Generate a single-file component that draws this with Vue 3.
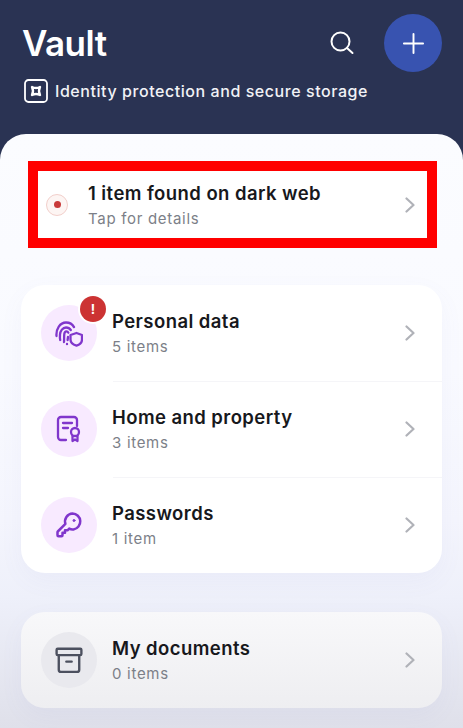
<template>
  <div class="page">
    <header class="head">
      <div class="head-top">
        <h1 class="title">Vault</h1>
        <div class="head-actions">
          <svg class="search" viewBox="0 0 24 24" fill="none" stroke="#fff" stroke-width="2" stroke-linecap="round">
            <circle cx="10.500" cy="10.500" r="9" />
            <path d="M17 17l5.500 5" />
          </svg>
          <button class="add">
            <svg viewBox="0 0 24 24" fill="none" stroke="#fff" stroke-width="2" stroke-linecap="round">
              <path d="M12 2v20M2 12h20" />
            </svg>
          </button>
        </div>
      </div>
      <div class="subtitle">
        <svg class="safe" viewBox="0 0 24 24" fill="none" stroke="#fff">
          <rect x="1" y="1" width="22" height="22" rx="3.500" stroke-width="1.800" />
          <path d="M8 8q4 2 8 0q-2 4 0 8q-4-2-8 0q2-4 0-8z" stroke-width="2.400" stroke-linejoin="round" />
        </svg>
        <span>Identity protection and secure storage</span>
      </div>
    </header>

    <main class="sheet">
      <div class="alert">
        <div class="pulse"><span></span></div>
        <div class="texts">
          <div class="name">1 item found on dark web</div>
          <div class="sub">Tap for details</div>
        </div>
        <svg class="chev" viewBox="0 0 10 16" fill="none"><path d="M1.500 1.500 8.500 8l-7 6.500" /></svg>
      </div>

      <section class="card">
        <div v-for="row in rows" :key="row.name" class="row">
          <div class="round">
            <svg v-if="row.icon === 'finger'" class="ico" viewBox="0 0 28 28" fill="none" stroke="#8036cc" stroke-width="2.300" stroke-linecap="round" stroke-linejoin="round">
              <path d="M1.500 17c-.6-7 3.500-13.500 9.500-13.500 3.600 0 6.500 1.700 8 4.600" />
              <path d="M5.200 21c-.4-1.500-.3-4-.2-5.500.3-3.600 2.700-7 6-7 2.200 0 3.800 1 4.800 2.500" />
              <path d="M9 23c.2-2 0-6 .3-8 .2-1.500 1-2.600 2.100-2.600 1 0 1.600.5 1.900 1.300" />
              <path d="M13 18l-.4 3M12 25v.2" />
              <path d="M15.500 16l6-2 5.500 2v4.500c0 3.200-2.500 5.300-5.500 6.200-3-.9-6-3-6-6.200z" />
            </svg>
            <svg v-else-if="row.icon === 'deed'" class="ico" viewBox="0 0 28 28" fill="none" stroke="#8036cc" stroke-width="2.300" stroke-linecap="round" stroke-linejoin="round">
              <path d="M11 25H6a3 3 0 0 1-3-3V5a3 3 0 0 1 3-3h13a3 3 0 0 1 3 3v6" />
              <path d="M8 8h9M8 13h5" />
              <circle cx="20" cy="17" r="4" />
              <path d="M17.500 21v5l2.500-1.500 2.500 1.500v-5" />
            </svg>
            <svg v-else class="ico" viewBox="0 0 28 28" fill="none" stroke="#8036cc" stroke-width="2.500" stroke-linecap="round" stroke-linejoin="round">
              <path d="M17.500 2.500a8 8 0 0 1 1 15.900c-1.500.2-3-.1-4.300-.8l-1.700 1.700h-2.500v2.500H7.500v2.500c0 .5-.5 1-1 1H3.500c-.5 0-1-.5-1-1v-3.100c0-.3.100-.5.300-.7l7.600-7.600a8 8 0 0 1 7.100-10.400z" />
              <circle cx="19" cy="9.500" r="1" fill="#8036cc" stroke-width="1" />
            </svg>
            <span v-if="row.badge" class="badge">!</span>
          </div>
          <div class="texts">
            <div class="name">{{ row.name }}</div>
            <div class="sub">{{ row.sub }}</div>
          </div>
          <svg class="chev" viewBox="0 0 10 16" fill="none"><path d="M1.500 1.500 8.500 8l-7 6.500" /></svg>
        </div>
      </section>

      <section class="card docs">
        <div class="row">
          <div class="round grey">
            <svg class="ico" viewBox="0 0 26 26" fill="none" stroke="#4c505f" stroke-width="2.200" stroke-linejoin="round" stroke-linecap="round">
              <rect x="1.500" y="2.500" width="23" height="6" rx="1" />
              <path d="M3.500 8.500V22a2 2 0 0 0 2 2h15a2 2 0 0 0 2-2V8.500M10.500 14.500h5" />
            </svg>
          </div>
          <div class="texts">
            <div class="name">My documents</div>
            <div class="sub">0 items</div>
          </div>
          <svg class="chev" viewBox="0 0 10 16" fill="none"><path d="M1.500 1.500 8.500 8l-7 6.500" /></svg>
        </div>
      </section>
    </main>
  </div>
</template>

<script setup>
const rows = [
  { name: 'Personal data', sub: '5 items', icon: 'finger', badge: true },
  { name: 'Home and property', sub: '3 items', icon: 'deed' },
  { name: 'Passwords', sub: '1 item', icon: 'key' }
]
</script>

<style>
html,
body {
  margin: 0;
  background: #2a3353;
}
</style>

<style scoped>
.page {
  width: 463px;
  height: 728px;
  overflow: hidden;
  display: flex;
  flex-direction: column;
  background: #2a3353;
  font-family: Inter, "Liberation Sans", sans-serif;
}

.head {
  height: 134px;
  flex: none;
  box-sizing: border-box;
  padding: 14px 21px 0 22px;
  color: #fff;
}

.head-top {
  display: flex;
  align-items: center;
  justify-content: space-between;
  height: 58px;
}

.title {
  margin: 0;
  font-size: 35px;
  font-weight: 600;
  letter-spacing: -0.5px;
}

.head-actions {
  display: flex;
  align-items: center;
  gap: 30px;
}

.search {
  width: 24px;
  height: 24px;
}

.add {
  width: 58px;
  height: 58px;
  padding: 0;
  border: none;
  border-radius: 50%;
  background: #3853b0;
  display: flex;
  align-items: center;
  justify-content: center;
}

.add svg {
  width: 23px;
  height: 23px;
}

.subtitle {
  display: flex;
  align-items: center;
  gap: 7px;
  margin-top: 7px;
  margin-left: 2px;
  font-size: 16px;
  font-weight: 500;
  letter-spacing: 0.56px;
  color: #f1f2f6;
}

.safe {
  width: 24px;
  height: 24px;
}

.sheet {
  flex: 1;
  box-sizing: border-box;
  border-radius: 26px 26px 0 0;
  padding: 27px 21px 0;
  background: linear-gradient(to bottom, #fbfcff 0%, #f9faff 40%, #f4f5fd 65%, #eef0fa 78%, #dfe0ea 100%);
}

.alert {
  box-sizing: border-box;
  margin: 0 5px 0 7px;
  height: 87px;
  border: 10px solid #ff0000;
  background: #fff;
  display: flex;
  align-items: center;
  padding: 0 12px 0 8px;
}

.pulse {
  width: 22px;
  height: 22px;
  box-sizing: border-box;
  border: 1.500px solid #f2cfcb;
  border-radius: 50%;
  background: #fdf5f3;
  display: flex;
  align-items: center;
  justify-content: center;
  margin-right: 20px;
}

.pulse span {
  width: 7px;
  height: 7px;
  border-radius: 50%;
  background: #c93a3a;
}

.card {
  margin-top: 37px;
  background: #fff;
  border-radius: 24px;
  box-shadow: 0 8px 24px rgba(120, 125, 190, 0.05);
}

.row {
  position: relative;
  height: 96px;
  display: flex;
  align-items: center;
  padding: 0 27px 0 20px;
}

.row + .row::before {
  content: "";
  position: absolute;
  top: 0;
  left: 92px;
  right: 0;
  height: 1px;
  background: #f5f5f8;
}

.round {
  position: relative;
  width: 56px;
  height: 56px;
  flex: none;
  border-radius: 50%;
  background: #f8eaff;
  display: flex;
  align-items: center;
  justify-content: center;
  margin-right: 15px;
}

.round.grey {
  background: #e9e9ee;
}

.ico {
  width: 28px;
  height: 28px;
}

.badge {
  position: absolute;
  top: -9px;
  right: -9px;
  width: 26px;
  height: 26px;
  border-radius: 50%;
  background: #cc3333;
  color: #fff;
  font-size: 13px;
  font-weight: 700;
  line-height: 26px;
  text-align: center;
  box-shadow: 0 0 0 2px #fff;
}

.texts {
  flex: 1;
  min-width: 0;
}

.name {
  font-size: 18.500px;
  font-weight: 600;
  line-height: 24px;
  letter-spacing: 0.43px;
  color: #17181c;
}

.sub {
  margin-top: 4px;
  font-size: 15px;
  line-height: 20px;
  letter-spacing: 0.7px;
  color: #7c7f88;
}

.chev {
  width: 10px;
  height: 16px;
  flex: none;
}

.chev path {
  stroke: #b0b2b8;
  stroke-width: 2.200;
  stroke-linecap: round;
  stroke-linejoin: round;
}

.docs {
  margin-top: 39px;
  background: linear-gradient(to bottom, #f8f8fa, #eeeef1);
}
</style>
